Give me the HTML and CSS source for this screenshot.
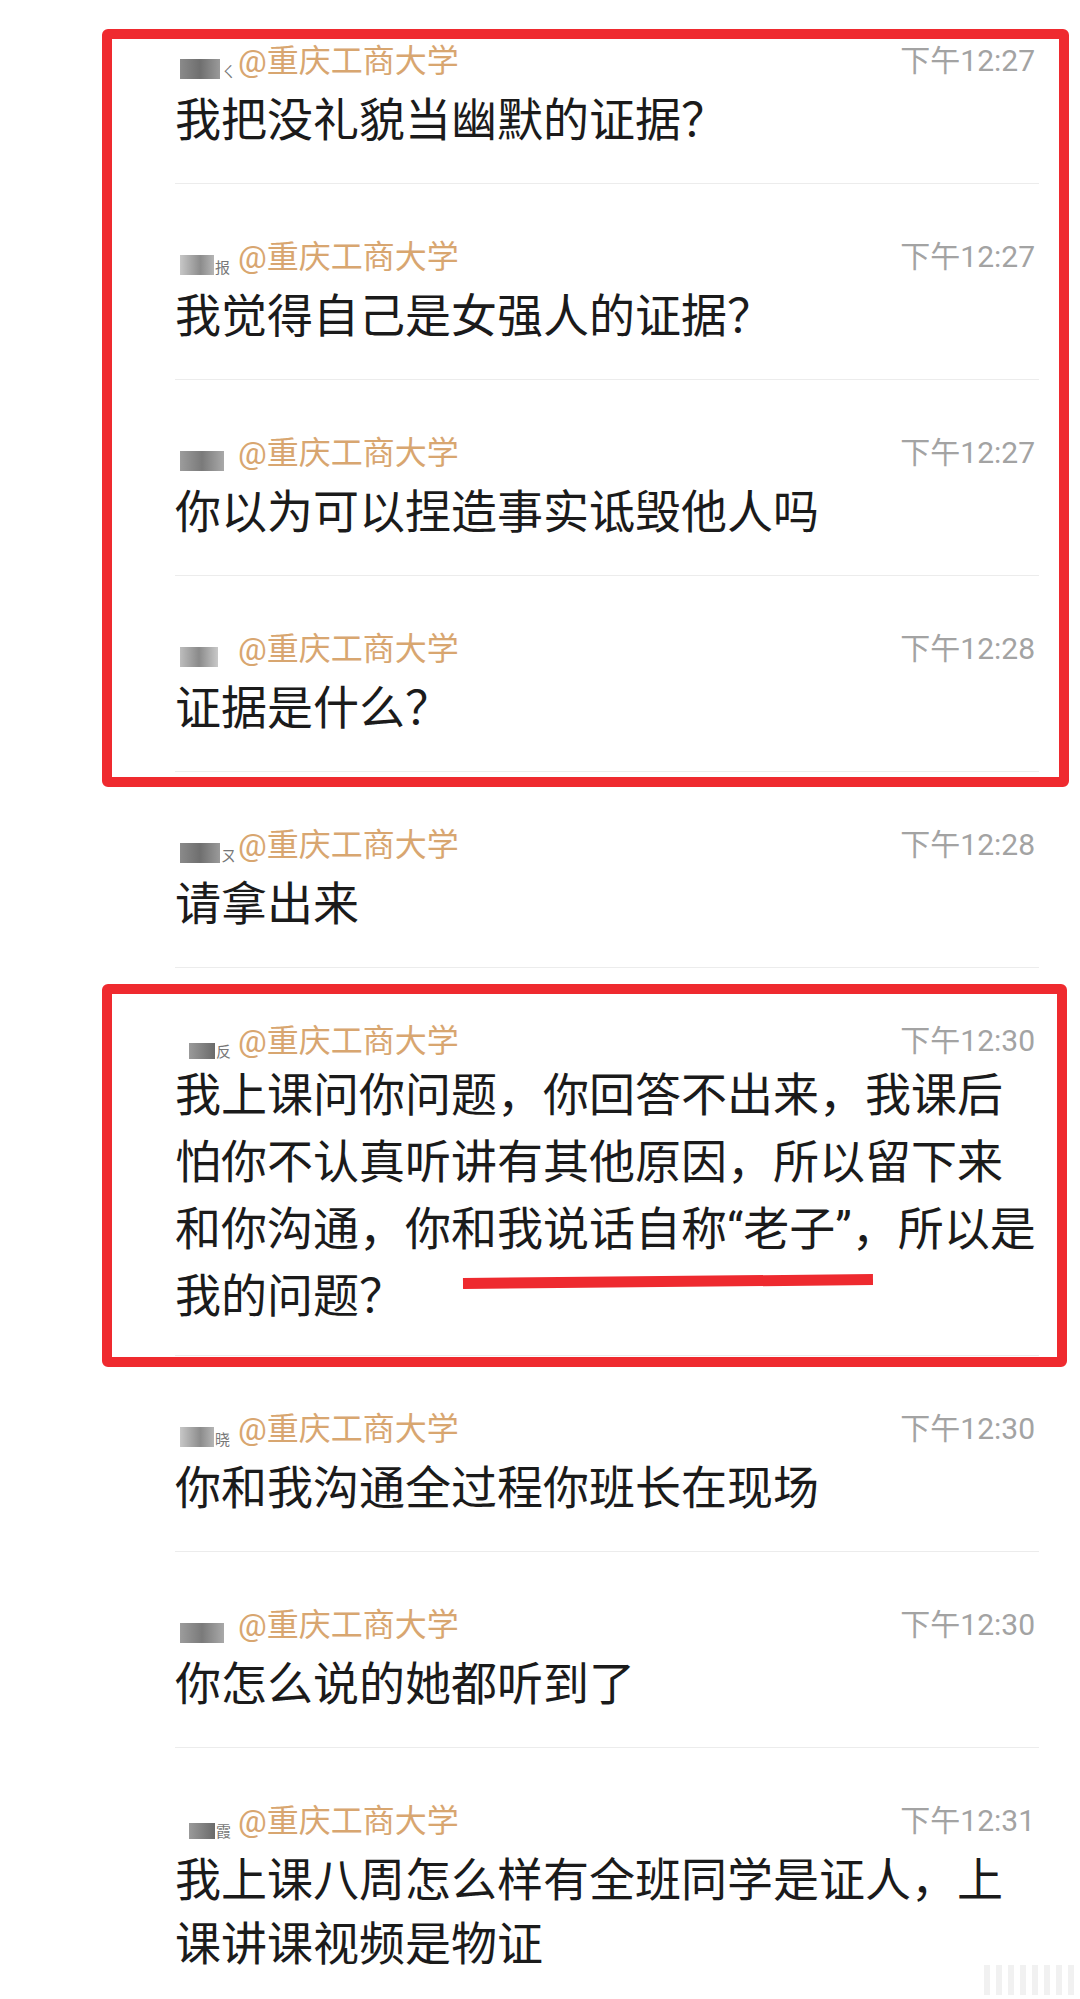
FILE: index.html
```html
<!DOCTYPE html>
<html lang="zh-CN">
<head>
<meta charset="utf-8">
<title>聊天记录</title>
<link rel="stylesheet" href="styles.css">
</head>
<body>
<div class="list">
  <div class="group box-a">
    <div class="entry">
      <div class="head"><span class="who"><span class="mask"><span class="blk b1"></span><span class="tiny">ㄑ</span></span><span class="at">@重庆工商大学</span></span><span class="time">下午12:27</span></div>
      <div class="msg">我把没礼貌当幽默的证据？</div>
    </div>
    <div class="entry">
      <div class="head"><span class="who"><span class="mask"><span class="blk b2"></span><span class="tiny">报</span></span><span class="at">@重庆工商大学</span></span><span class="time">下午12:27</span></div>
      <div class="msg">我觉得自己是女强人的证据？</div>
    </div>
    <div class="entry">
      <div class="head"><span class="who"><span class="mask"><span class="blk b3"></span></span><span class="at">@重庆工商大学</span></span><span class="time">下午12:27</span></div>
      <div class="msg">你以为可以捏造事实诋毁他人吗</div>
    </div>
    <div class="entry">
      <div class="head"><span class="who"><span class="mask"><span class="blk b4"></span></span><span class="at">@重庆工商大学</span></span><span class="time">下午12:28</span></div>
      <div class="msg">证据是什么？</div>
    </div>
  </div>
  <div class="entry">
    <div class="head"><span class="who"><span class="mask"><span class="blk b1"></span><span class="tiny">ㄡ</span></span><span class="at">@重庆工商大学</span></span><span class="time">下午12:28</span></div>
    <div class="msg">请拿出来</div>
  </div>
  <div class="group box-b">
    <div class="entry tall">
      <div class="head"><span class="who"><span class="mask"><span class="blk b5"></span><span class="tiny">反</span></span><span class="at">@重庆工商大学</span></span><span class="time">下午12:30</span></div>
      <div class="msg multi">我上课问你问题，你回答不出来，我课后怕你不认真听讲有其他原因，所以留下来和你沟通，你和我说话自称“老子”，所以是我的问题？</div>
      <div class="underline"></div>
    </div>
  </div>
  <div class="entry">
    <div class="head"><span class="who"><span class="mask"><span class="blk b2"></span><span class="tiny">晓</span></span><span class="at">@重庆工商大学</span></span><span class="time">下午12:30</span></div>
    <div class="msg">你和我沟通全过程你班长在现场</div>
  </div>
  <div class="entry">
    <div class="head"><span class="who"><span class="mask"><span class="blk b3"></span></span><span class="at">@重庆工商大学</span></span><span class="time">下午12:30</span></div>
    <div class="msg">你怎么说的她都听到了</div>
  </div>
  <div class="entry">
    <div class="head"><span class="who"><span class="mask"><span class="blk b5"></span><span class="tiny">霞</span></span><span class="at">@重庆工商大学</span></span><span class="time">下午12:31</span></div>
    <div class="msg">我上课八周怎么样有全班同学是证人，上课讲课视频是物证</div>
  </div>
</div>
<div class="watermark"><span></span><span></span><span></span><span></span><span></span><span></span><span></span><span></span></div>
</body>
</html>
```

FILE: styles.css
```css
html, body {
  margin: 0;
  padding: 0;
  background: #ffffff;
}
body {
  width: 1080px;
  height: 1999px;
  overflow: hidden;
  position: relative;
  font-family: Roboto, "Noto Sans CJK SC", sans-serif;
  color: #1b1b1b;
}
.list {
  padding: 0 41px 0 175px;
}
.group {
  position: relative;
}
.group::after {
  content: "";
  position: absolute;
  border: 10px solid #ef2a2f;
  border-radius: 6px;
  pointer-events: none;
}
.box-a::after {
  top: 29px;
  left: -73px;
  right: -30px;
  bottom: -15px;
}
.box-b::after {
  top: 16px;
  left: -73px;
  right: -28px;
  bottom: -11px;
}
.entry {
  position: relative;
  padding: 53px 0 31px;
  border-bottom: 1px solid #ececec;
}
.entry.tall {
  padding-bottom: 25px;
}
.list > .group:first-child > .entry:first-child {
  padding-top: 41px;
}
.head {
  display: flex;
  justify-content: space-between;
  align-items: center;
  height: 40px;
}
.who {
  display: flex;
  align-items: center;
}
.mask {
  width: 63px;
  height: 40px;
  display: flex;
  align-items: flex-end;
  padding-bottom: 2px;
  box-sizing: border-box;
  position: relative;
}
.blk {
  display: block;
  height: 20px;
  margin-left: 5px;
  background: linear-gradient(90deg, #8a8a8a, #6f6f6f 50%, #9a9a9a);
  filter: blur(0.6px);
}
.b1 { width: 40px; }
.b2 { width: 34px; background: linear-gradient(90deg, #c7c7c7, #8c8c8c 60%, #b5b5b5); }
.b3 { width: 44px; background: linear-gradient(90deg, #9c9c9c, #7a7a7a 50%, #a9a9a9); }
.b4 { width: 38px; background: linear-gradient(90deg, #bdbdbd, #8a8a8a 50%, #c9c9c9); }
.b5 { width: 26px; margin-left: 14px; height: 16px; background: linear-gradient(90deg, #9a9a9a, #6a6a6a); }
.tiny {
  font-family: "Noto Sans CJK SC", sans-serif;
  font-size: 15px;
  line-height: 16px;
  color: #777;
  margin-left: 1px;
}
.at {
  font-family: Roboto, "Noto Sans CJK SC", sans-serif;
  font-size: 32px;
  line-height: 40px;
  color: #d8a670;
}
.time {
  font-family: Roboto, "Noto Sans CJK SC", sans-serif;
  font-size: 30px;
  line-height: 40px;
  color: #a3a3a3;
  margin-right: 4px;
}
.msg {
  margin-top: 7px;
  font-family: Roboto, "Noto Sans CJK SC", sans-serif;
  font-size: 46px;
  line-height: 64px;
  color: #1b1b1b;
}
.msg.multi {
  margin-top: 1px;
  line-height: 67px;
}
.underline {
  position: absolute;
  left: 288px;
  top: 310px;
  width: 410px;
  height: 11px;
  background: #ee2a2f;
  transform: rotate(-0.55deg);
  transform-origin: left center;
}
.watermark {
  position: absolute;
  right: 6px;
  bottom: 4px;
  display: flex;
  gap: 6px;
  align-items: flex-end;
  opacity: 0.35;
}
.watermark span {
  display: block;
  width: 6px;
  height: 30px;
  background: #d8d8d8;
}
```
